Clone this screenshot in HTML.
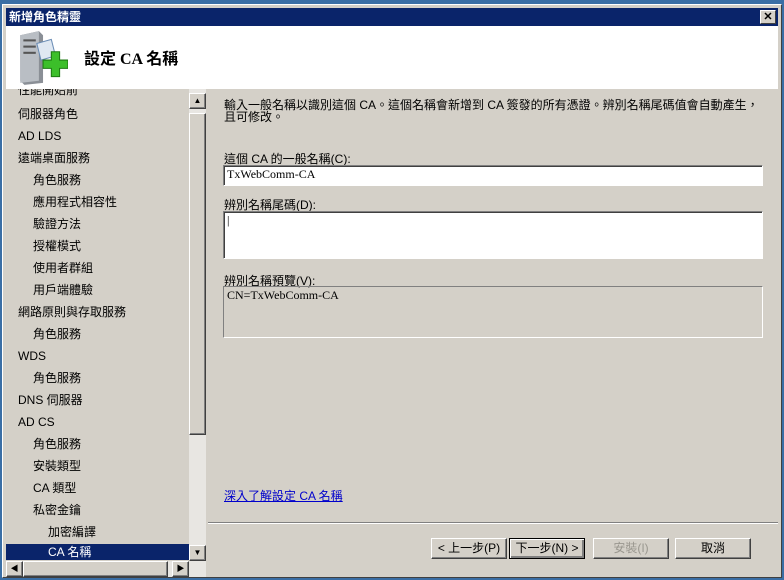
<!DOCTYPE html>
<html><head><meta charset="utf-8"><style>
*{margin:0;padding:0;box-sizing:border-box}
body{width:784px;height:580px;background:#3a6ea5;position:relative;overflow:hidden;font-family:"Liberation Serif","Noto Sans CJK TC",serif;font-size:12px;color:#000}
.win{position:absolute;left:2px;top:4px;width:780px;height:574px;background:#d4d0c8;border:1px solid #fff;border-right-color:#404040;border-bottom-color:#404040}
.title{position:absolute;left:3px;top:3px;right:3px;height:18px;background:#0a246a;color:#fff;font-weight:bold;font-size:12px;line-height:18px;padding-left:3px;font-family:"Liberation Sans","Noto Sans CJK TC",sans-serif}
.x{position:absolute;right:2px;top:2px;width:16px;height:14px;background:#d4d0c8;border:1px solid #fff;border-right-color:#404040;border-bottom-color:#404040;color:#000;font-size:11px;line-height:12px;text-align:center}
.head{position:absolute;left:3px;top:21px;right:3px;height:63px;background:#fff}
.head h1{position:absolute;left:78px;top:19px;font-size:16px;font-weight:bold;font-family:"Liberation Serif","Noto Sans CJK TC",serif}
.left{position:absolute;left:3px;top:84px;width:200px;height:488px;background:#d4d0c8;overflow:hidden}
.it{position:absolute;height:18px;line-height:18px;font-size:12px;font-family:"Liberation Sans","Noto Sans CJK TC",sans-serif}
.sel{background:#0a246a;color:#fff;left:0;width:183px;height:16px;line-height:16px}
.vs{position:absolute;left:183px;top:0;width:17px;height:472px;background:#e8e6e2}
.btn3{position:absolute;background:#d4d0c8;border:1px solid #fff;border-right-color:#404040;border-bottom-color:#404040;box-shadow:inset -1px -1px #808080}
.hs{position:absolute;left:0;top:472px;width:200px;height:16px;background:#e8e6e2}
.right{position:absolute;left:204px;top:84px;right:3px;height:488px;border-left:1px solid #808080}
.inp{position:absolute;background:#fff;border:1px solid #808080;border-right-color:#fff;border-bottom-color:#fff;box-shadow:inset 1px 1px #404040;font-size:12px;padding:1px 3px}
.lbl{position:absolute;font-size:12px;font-family:"Liberation Sans","Noto Sans CJK TC",sans-serif}
.b{position:absolute;top:533px;height:21px;width:76px;background:#d4d0c8;border:1px solid #fff;border-right-color:#404040;border-bottom-color:#404040;box-shadow:inset -1px -1px #808080;text-align:center;line-height:18px;font-size:12px;font-family:"Liberation Sans","Noto Sans CJK TC",sans-serif}
</style></head><body>
<div class="win">
<div class="title">新增角色精靈<div class="x">✕</div></div>
<div class="head">
<svg style="position:absolute;left:10px;top:3px" width="52" height="58" viewBox="0 0 50 56">
<path d="M4 6 L22 2 L26 6 L26 52 L8 54 L4 50Z" fill="#8a8f96"/>
<path d="M4 6 L22 2 L22 50 L4 52Z" fill="#b9bec4"/>
<rect x="7" y="10" width="12" height="2" fill="#555"/><rect x="7" y="16" width="12" height="2" fill="#555"/><rect x="7" y="22" width="12" height="2" fill="#555"/>
<path d="M20 14 L34 10 L38 26 L24 30Z" fill="#dfe8f2" stroke="#6b8db5"/>
<path d="M26 30 h8 v-8 h8 v8 h8 v8 h-8 v8 h-8 v-8 h-8z" fill="#3cbf2a" stroke="#1d7a12"/>
</svg>
<h1>設定 CA 名稱</h1></div>
<div class="left">
<div class="it" style="left:12px;top:-8px">性能開始前</div>
<div class="it" style="left:12px;top:16px">伺服器角色</div>
<div class="it" style="left:12px;top:38px">AD LDS</div>
<div class="it" style="left:12px;top:60px">遠端桌面服務</div>
<div class="it" style="left:27px;top:82px">角色服務</div>
<div class="it" style="left:27px;top:104px">應用程式相容性</div>
<div class="it" style="left:27px;top:126px">驗證方法</div>
<div class="it" style="left:27px;top:148px">授權模式</div>
<div class="it" style="left:27px;top:170px">使用者群組</div>
<div class="it" style="left:27px;top:192px">用戶端體驗</div>
<div class="it" style="left:12px;top:214px">網路原則與存取服務</div>
<div class="it" style="left:27px;top:236px">角色服務</div>
<div class="it" style="left:12px;top:258px">WDS</div>
<div class="it" style="left:27px;top:280px">角色服務</div>
<div class="it" style="left:12px;top:302px">DNS 伺服器</div>
<div class="it" style="left:12px;top:324px">AD CS</div>
<div class="it" style="left:27px;top:346px">角色服務</div>
<div class="it" style="left:27px;top:368px">安裝類型</div>
<div class="it" style="left:27px;top:390px">CA 類型</div>
<div class="it" style="left:27px;top:412px">私密金鑰</div>
<div class="it" style="left:42px;top:434px">加密編譯</div>
<div class="it sel" style="top:455px;padding-left:42px">CA 名稱</div>
<div class="vs">
<div class="btn3" style="left:0;top:4px;width:17px;height:16px;font-size:8px;text-align:center;line-height:14px">▲</div>
<div class="btn3" style="left:0;top:24px;width:17px;height:322px"></div>
<div class="btn3" style="left:0;top:456px;width:17px;height:16px;font-size:8px;text-align:center;line-height:14px">▼</div>
</div>
<div class="hs">
<div class="btn3" style="left:0;top:0;width:17px;height:16px;font-size:8px;text-align:center;line-height:14px">◀</div>
<div class="btn3" style="left:17px;top:0;width:145px;height:16px"></div>
<div class="btn3" style="left:166px;top:0;width:17px;height:16px;font-size:8px;text-align:center;line-height:14px">▶</div>
</div>
</div>
<div class="lbl" style="left:221px;top:94px;width:540px;line-height:12px">輸入一般名稱以識別這個 CA。這個名稱會新增到 CA 簽發的所有憑證。辨別名稱尾碼值會自動產生，且可修改。</div>
<div class="lbl" style="left:221px;top:145px">這個 CA 的一般名稱(C):</div>
<div class="inp" style="left:220px;top:160px;width:540px;height:21px;font-family:'Liberation Serif',serif">TxWebComm-CA</div>
<div class="lbl" style="left:221px;top:191px">辨別名稱尾碼(D):</div>
<div class="inp" style="left:220px;top:206px;width:540px;height:48px">|</div>
<div class="lbl" style="left:221px;top:267px">辨別名稱預覽(V):</div>
<div style="position:absolute;left:220px;top:281px;width:540px;height:52px;border:1px solid #808080;border-right-color:#fff;border-bottom-color:#fff;padding:1px 3px;font-family:'Liberation Serif',serif">CN=TxWebComm-CA</div>
<div class="lbl" style="left:221px;top:482px;color:#00c;text-decoration:underline">深入了解設定 CA 名稱</div>
<div style="position:absolute;left:205px;top:517px;right:3px;border-top:1px solid #808080;border-bottom:1px solid #fff"></div>
<div class="b" style="left:428px">&lt; 上一步(P)</div>
<div class="b" style="left:506px;border:1px solid #000;box-shadow:inset 1px 1px #fff,inset -2px -2px #808080">下一步(N) &gt;</div>
<div class="b" style="left:590px;color:#9a978f">安裝(I)</div>
<div class="b" style="left:672px">取消</div>
</div>
</body></html>
